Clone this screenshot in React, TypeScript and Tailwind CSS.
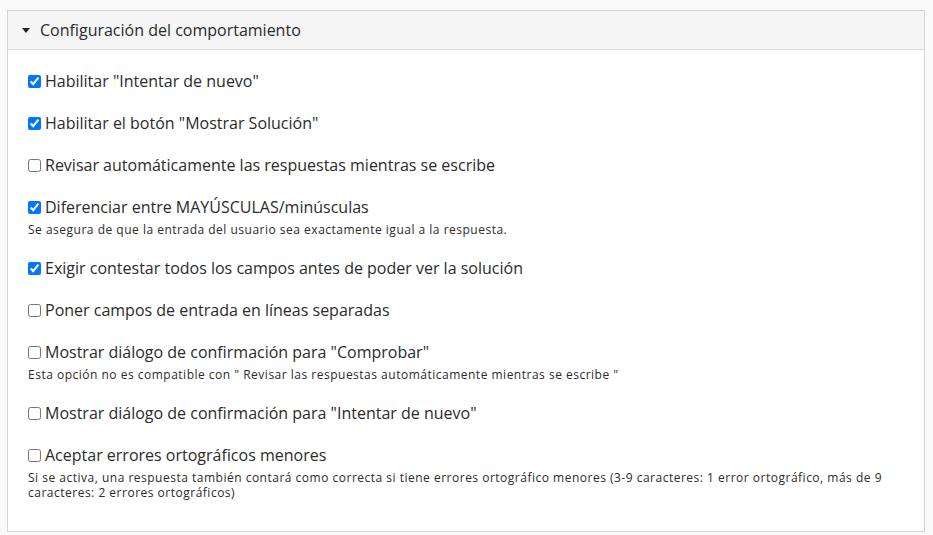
import React, { useState } from 'react';

const options = [
    { label: 'Habilitar "Intentar de nuevo"', checked: true },
    { label: 'Habilitar el botón "Mostrar Solución"', checked: true },
    { label: 'Revisar automáticamente las respuestas mientras se escribe', checked: false },
    { label: 'Diferenciar entre MAYÚSCULAS/minúsculas', checked: true, desc: 'Se asegura de que la entrada del usuario sea exactamente igual a la respuesta.' },
    { label: 'Exigir contestar todos los campos antes de poder ver la solución', checked: true },
    { label: 'Poner campos de entrada en líneas separadas', checked: false },
    { label: 'Mostrar diálogo de confirmación para "Comprobar"', checked: false, desc: 'Esta opción no es compatible con " Revisar las respuestas automáticamente mientras se escribe "' },
    { label: 'Mostrar diálogo de confirmación para "Intentar de nuevo"', checked: false },
    {
        label: 'Aceptar errores ortográficos menores',
        checked: false,
        desc: 'Si se activa, una respuesta también contará como correcta si tiene errores ortográfico menores (3-9 caracteres: 1 error ortográfico, más de 9 caracteres: 2 errores ortográficos)',
    },
];

const App = () => {
    const [values, setValues] = useState(options.map(o => o.checked));

    return (
        <div className="min-h-screen bg-[#fafafa] pt-[10px] pl-[7px] pr-[8px] font-['Open_Sans',sans-serif] text-[#2b2b2b]">
            <div className="border border-[#d4d4d4] bg-white">
                {/* header */}
                <div className="flex items-center h-[39px] bg-[#f5f5f5] border-b border-[#dcdcdc] pl-[14px]">
                    <svg width="8" height="5" viewBox="0 0 8 5" className="mr-[10px]">
                        <path d="M0 0 L8 0 L4 5 Z" fill="#222" />
                    </svg>
                    <span className="text-[16px] leading-[24px]">Configuración del comportamiento</span>
                </div>

                <div className="pl-[20px] pr-[20px] pt-[19px] pb-[12px]">
                    {options.map((o, i) => (
                        <div key={i} className="mb-[18px]">
                            <label className="flex items-center text-[16px] leading-[24px]">
                                <input
                                    type="checkbox"
                                    checked={values[i]}
                                    onChange={() => setValues(v => v.map((x, j) => (j === i ? !x : x)))}
                                    className="w-[13px] h-[13px] mr-[4px] ml-0"
                                />
                                {o.label}
                            </label>
                            {o.desc && (
                                <div className="mt-[3px] text-[12px] leading-[15px] tracking-[0.5px] pb-[1px]">{o.desc}</div>
                            )}
                        </div>
                    ))}
                </div>
            </div>
        </div>
    );
};

export default App;
